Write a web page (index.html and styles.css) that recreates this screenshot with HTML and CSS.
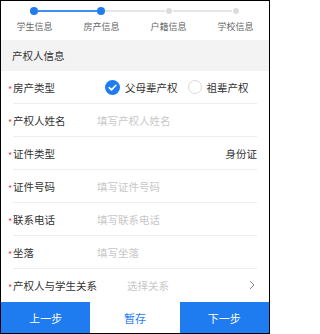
FILE: index.html
```html
<!DOCTYPE html>
<html lang="zh-CN">
<head>
<meta charset="utf-8">
<title>产权人信息</title>
<link rel="stylesheet" href="styles.css">
</head>
<body>
<div class="screen">
  <div class="stepper">
    <div class="track">
      <span class="dot active"></span>
      <span class="line active"></span>
      <span class="dot active"></span>
      <span class="line"></span>
      <span class="dot"></span>
      <span class="line"></span>
      <span class="dot"></span>
    </div>
    <div class="labels">
      <span>学生信息</span>
      <span>房产信息</span>
      <span>户籍信息</span>
      <span>学校信息</span>
    </div>
  </div>
  <div class="section-title">产权人信息</div>
  <div class="form">
    <div class="field">
      <span class="star">*</span><span class="label">房产类型</span>
      <div class="radios">
        <span class="radio checked"><svg viewBox="0 0 15 15" width="15" height="15"><circle cx="7.5" cy="7.5" r="7.5" fill="#1f7cf0"/><path d="M4.2 7.7 L6.5 9.9 L10.9 5.3" fill="none" stroke="#fff" stroke-width="1.6" stroke-linecap="round" stroke-linejoin="round"/></svg>父母辈产权</span>
        <span class="radio"><span class="ring"></span>祖辈产权</span>
      </div>
    </div>
    <div class="field">
      <span class="star">*</span><span class="label">产权人姓名</span>
      <span class="placeholder">填写产权人姓名</span>
    </div>
    <div class="field">
      <span class="star">*</span><span class="label">证件类型</span>
      <span class="value">身份证</span>
    </div>
    <div class="field">
      <span class="star">*</span><span class="label">证件号码</span>
      <span class="placeholder">填写证件号码</span>
    </div>
    <div class="field">
      <span class="star">*</span><span class="label">联系电话</span>
      <span class="placeholder">填写联系电话</span>
    </div>
    <div class="field">
      <span class="star">*</span><span class="label">坐落</span>
      <span class="placeholder">填写坐落</span>
    </div>
    <div class="field last">
      <span class="star">*</span><span class="label">产权人与学生关系</span>
      <span class="placeholder picker">选择关系</span>
      <svg class="chevron" viewBox="0 0 6 10" width="6" height="10"><path d="M1 1 L5 5 L1 9" fill="none" stroke="#888" stroke-width="1"/></svg>
    </div>
  </div>
  <div class="actions">
    <button class="btn primary">上一步</button>
    <button class="btn plain">暂存</button>
    <button class="btn primary">下一步</button>
  </div>
</div>
</body>
</html>
```
FILE: styles.css
```css
* { box-sizing: border-box; }
html, body { margin: 0; padding: 0; background: #fff; }
body { font-family: "Noto Sans CJK SC", "Noto Sans", sans-serif; }
.screen {
  width: 270px;
  height: 334px;
  border: 1px solid #000;
  display: flex;
  flex-direction: column;
  background: #fff;
}
.stepper { height: 39px; }
.track {
  display: flex;
  align-items: center;
  height: 8px;
  margin: 6px 0 0;
  padding: 0 29px 0 29px;
}
.dot {
  flex: 0 0 6px;
  width: 6px;
  height: 6px;
  border-radius: 50%;
  background: #dcdcdc;
  margin: 0 1px;
}
.dot.active {
  flex-basis: 8px;
  width: 8px;
  height: 8px;
  margin: 0;
  background: #1f7cf0;
}
.line { flex: 1; height: 2px; background: #e6e6e6; }
.line.active { background: #3f8ff2; }
.labels {
  display: grid;
  grid-template-columns: repeat(4, 1fr);
  margin-top: 6px;
  font-size: 9px;
  line-height: 12px;
  color: #666;
  text-align: center;
}
.section-title {
  height: 31px;
  line-height: 31px;
  background: #f3f3f3;
  padding-left: 11px;
  font-size: 10.5px;
  color: #333;
}
.form { flex: 1; }
.field {
  display: flex;
  align-items: center;
  height: 33px;
  padding: 0 12px 1px 7px;
  font-size: 10.5px;
  color: #333;
  background: linear-gradient(#eeeeee, #eeeeee) no-repeat 12px 100% / calc(100% - 24px) 1px;
}
.field.last { background: none; }
.star {
  width: 5px;
  color: #e5455a;
  font-size: 9px;
  line-height: 8px;
  margin-top: 6px;
}
.label { flex: 0 0 84px; white-space: nowrap; }
.placeholder { color: #c8c8c8; }
.placeholder.picker { margin-left: 30px; flex: 1; }
.value { margin-left: auto; }
.chevron { display: block; margin-right: 2px; }
.radios { display: flex; align-items: center; margin-left: 8px; }
.radio { display: flex; align-items: center; gap: 5px; }
.radio svg { display: block; }
.radio + .radio { margin-left: 10px; }
.ring {
  width: 14px;
  height: 14px;
  border-radius: 50%;
  border: 1px solid #dadada;
}
.actions { display: flex; height: 31px; }
.btn {
  flex: 1;
  border: 0;
  margin: 0;
  padding: 0;
  font-family: inherit;
  font-size: 11px;
}
.btn.primary { background: #1f7cf0; color: #fff; }
.btn.plain { background: #fff; color: #1f7cf0; }
```
